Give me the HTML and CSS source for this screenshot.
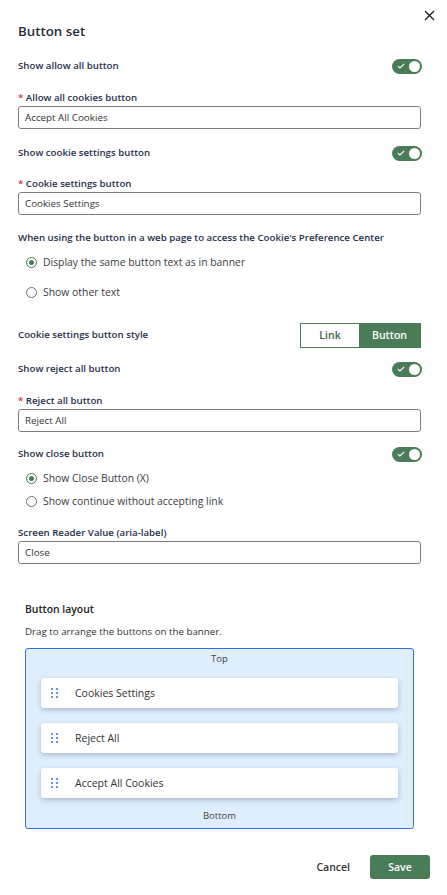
FILE: index.html
```html
<!DOCTYPE html>
<html lang="en">
<head>
<meta charset="utf-8">
<title>Button set</title>
<link rel="stylesheet" href="styles.css">
</head>
<body>
<div class="panel">
  <div class="close-row">
    <button class="close" aria-label="Close">
      <svg width="11" height="11" viewBox="0 0 11 11"><path d="M1 1L10 10M10 1L1 10" stroke="#222" stroke-width="1.4" fill="none"/></svg>
    </button>
  </div>
  <h1 class="title">Button set</h1>

  <div class="toggle-row r1">
    <span class="lbl">Show allow all button</span>
    <span class="toggle"><svg width="8" height="6" viewBox="0 0 8 6"><path d="M0.8 3.2L2.9 5L7.2 0.8" stroke="#fff" stroke-width="1.1" fill="none"/></svg><span class="knob"></span></span>
  </div>
  <div class="field f1">
    <label class="lbl"><span class="req">*</span> Allow all cookies button</label>
    <div class="input">Accept All Cookies</div>
  </div>

  <div class="toggle-row r2">
    <span class="lbl">Show cookie settings button</span>
    <span class="toggle"><svg width="8" height="6" viewBox="0 0 8 6"><path d="M0.8 3.2L2.9 5L7.2 0.8" stroke="#fff" stroke-width="1.1" fill="none"/></svg><span class="knob"></span></span>
  </div>
  <div class="field f2">
    <label class="lbl"><span class="req">*</span> Cookie settings button</label>
    <div class="input">Cookies Settings</div>
  </div>

  <div class="lbl heading">When using the button in a web page to access the Cookie's Preference Center</div>
  <div class="radio rd1"><span class="dot on"></span>Display the same button text as in banner</div>
  <div class="radio rd2"><span class="dot"></span>Show other text</div>

  <div class="toggle-row style-row">
    <span class="lbl">Cookie settings button style</span>
    <span class="seg"><span class="seg-item">Link</span><span class="seg-item active">Button</span></span>
  </div>

  <div class="toggle-row r3">
    <span class="lbl">Show reject all button</span>
    <span class="toggle"><svg width="8" height="6" viewBox="0 0 8 6"><path d="M0.8 3.2L2.9 5L7.2 0.8" stroke="#fff" stroke-width="1.1" fill="none"/></svg><span class="knob"></span></span>
  </div>
  <div class="field f3">
    <label class="lbl"><span class="req">*</span> Reject all button</label>
    <div class="input">Reject All</div>
  </div>

  <div class="toggle-row r4">
    <span class="lbl">Show close button</span>
    <span class="toggle"><svg width="8" height="6" viewBox="0 0 8 6"><path d="M0.8 3.2L2.9 5L7.2 0.8" stroke="#fff" stroke-width="1.1" fill="none"/></svg><span class="knob"></span></span>
  </div>
  <div class="radio rd3"><span class="dot on"></span>Show Close Button (X)</div>
  <div class="radio rd4"><span class="dot"></span>Show continue without accepting link</div>

  <div class="field f4">
    <label class="lbl">Screen Reader Value (aria-label)</label>
    <div class="input">Close</div>
  </div>

  <section class="layout">
    <div class="layout-title">Button layout</div>
    <div class="layout-desc">Drag to arrange the buttons on the banner.</div>
    <div class="dropzone">
      <div class="zone-label top">Top</div>
      <div class="cards">
        <div class="card"><span class="grip"><i></i><i></i><i></i><i></i><i></i><i></i></span>Cookies Settings</div>
        <div class="card"><span class="grip"><i></i><i></i><i></i><i></i><i></i><i></i></span>Reject All</div>
        <div class="card"><span class="grip"><i></i><i></i><i></i><i></i><i></i><i></i></span>Accept All Cookies</div>
      </div>
      <div class="zone-label bottom">Bottom</div>
    </div>
  </section>

  <div class="footer">
    <button class="cancel">Cancel</button>
    <button class="save">Save</button>
  </div>
</div>
</body>
</html>
```

FILE: styles.css
```css
* { box-sizing: border-box; }
html, body { margin: 0; padding: 0; background: #fff; }
body {
  font-family: "Open Sans", "Liberation Sans", sans-serif;
  color: #2a3140;
  width: 447px;
}
.panel {
  padding: 0 26px 0 18px;
  display: flex;
  flex-direction: column;
}
.close-row {
  display: flex;
  justify-content: flex-end;
  margin-right: -14px;
  padding-top: 10px;
  height: 21px;
}
.close {
  border: 0; background: none; padding: 0; width: 11px; height: 11px; display: block;
}
.close svg { display: block; }
.title {
  margin: 0;
  font-size: 13.3px;
  font-weight: 600;
  line-height: 20px;
  color: #262c38;
}
.lbl {
  font-size: 9.7px;
  font-weight: 600;
  line-height: 16px;
  color: #27304a;
}
.req { color: #d0304b; }
.toggle-row {
  display: flex;
  justify-content: space-between;
  align-items: center;
  height: 20px;
}
.toggle {
  width: 30px;
  height: 15px;
  border-radius: 8px;
  background: #4a7d57;
  display: flex;
  align-items: center;
  padding: 0 2px 0 5px;
  justify-content: space-between;
  margin-right: -1px;
}
.toggle svg { display: block; }
.knob {
  width: 11px; height: 11px; border-radius: 50%; background: #fff;
}
.field { display: flex; flex-direction: column; }
.input {
  height: 23px;
  border: 1px solid #7a7f87;
  border-radius: 3px;
  padding: 0 6px;
  font-size: 9.8px;
  line-height: 21px;
  color: #333;
}
.r1 { margin-top: 15px; }
.f1 { margin-top: 14px; }
.r2 { margin-top: 14px; }
.f2 { margin-top: 13px; }
.heading { margin-top: 15px; }
.radio {
  display: flex;
  align-items: center;
  height: 20px;
  font-size: 10.4px;
  color: #3a3d44;
  padding-left: 8px;
}
.dot {
  width: 11px; height: 11px; border-radius: 50%;
  border: 1px solid #6b6f76;
  margin-right: 6px;
  display: flex; align-items: center; justify-content: center;
  flex: none;
}
.dot.on { border-color: #4a7d57; }
.dot.on::after {
  content: ""; width: 5px; height: 5px; border-radius: 50%; background: #4a7d57;
}
.rd1 { margin-top: 6px; }
.rd2 { margin-top: 10px; }
.style-row { margin-top: 21px; height: 24px; }
.seg {
  display: flex;
  border: 1px solid #4a7d57;
  height: 25px;
  width: 121px;
}
.seg-item {
  flex: 1;
  display: flex; align-items: center; justify-content: center;
  font-size: 10.5px;
  font-weight: 600;
  color: #3f5f4a;
}
.seg-item.active { background: #4a7d57; color: #fff; flex: 0 0 61px; }
.r3 { margin-top: 12px; }
.f3 { margin-top: 14px; }
.r4 { margin-top: 12px; }
.rd3 { margin-top: 4px; }
.rd4 { margin-top: 3px; }
.f4 { margin-top: 14px; }
.layout {
  margin: 37px 7px 0 7px;
}
.layout-title {
  font-size: 10.4px; font-weight: 600; line-height: 16px; color: #222;
}
.layout-desc {
  margin-top: 7px;
  font-size: 9.75px; line-height: 16px; color: #333;
}
.dropzone {
  margin-top: 8px;
  background: #dfeefc;
  border: 1px solid #2f6ff0;
  border-radius: 3px;
  padding: 2px 15px 4px;
}
.zone-label {
  text-align: center; font-size: 9.5px; line-height: 16px; color: #444;
}
.cards {
  margin-top: 11px;
  display: flex; flex-direction: column; gap: 15px;
}
.card {
  height: 30px;
  background: #fff;
  border-radius: 3px;
  box-shadow: 0 2px 5px rgba(40, 60, 90, 0.3);
  display: flex; align-items: center;
  font-size: 10.5px; color: #333;
  padding-left: 10px;
}
.grip {
  display: grid;
  grid-template-columns: 2px 2px;
  column-gap: 3px;
  row-gap: 2px;
  margin-right: 17px;
  width: 7px;
}
.grip i { width: 2px; height: 2px; background: #2f6ff0; border-radius: 50%; display: block; }
.bottom { margin-top: 10px; }
.footer {
  display: flex;
  justify-content: flex-end;
  align-items: center;
  margin: 26px -9px 0 0;
  gap: 20px;
}
.cancel {
  border: 0; background: none; padding: 0;
  font-family: inherit; font-size: 10.5px; font-weight: 600; color: #333;
}
.save {
  border: 0; border-radius: 3px;
  background: #4a7d57; color: #fff;
  width: 60px; height: 24px;
  font-family: inherit; font-size: 10.5px; font-weight: 600;
}
```
